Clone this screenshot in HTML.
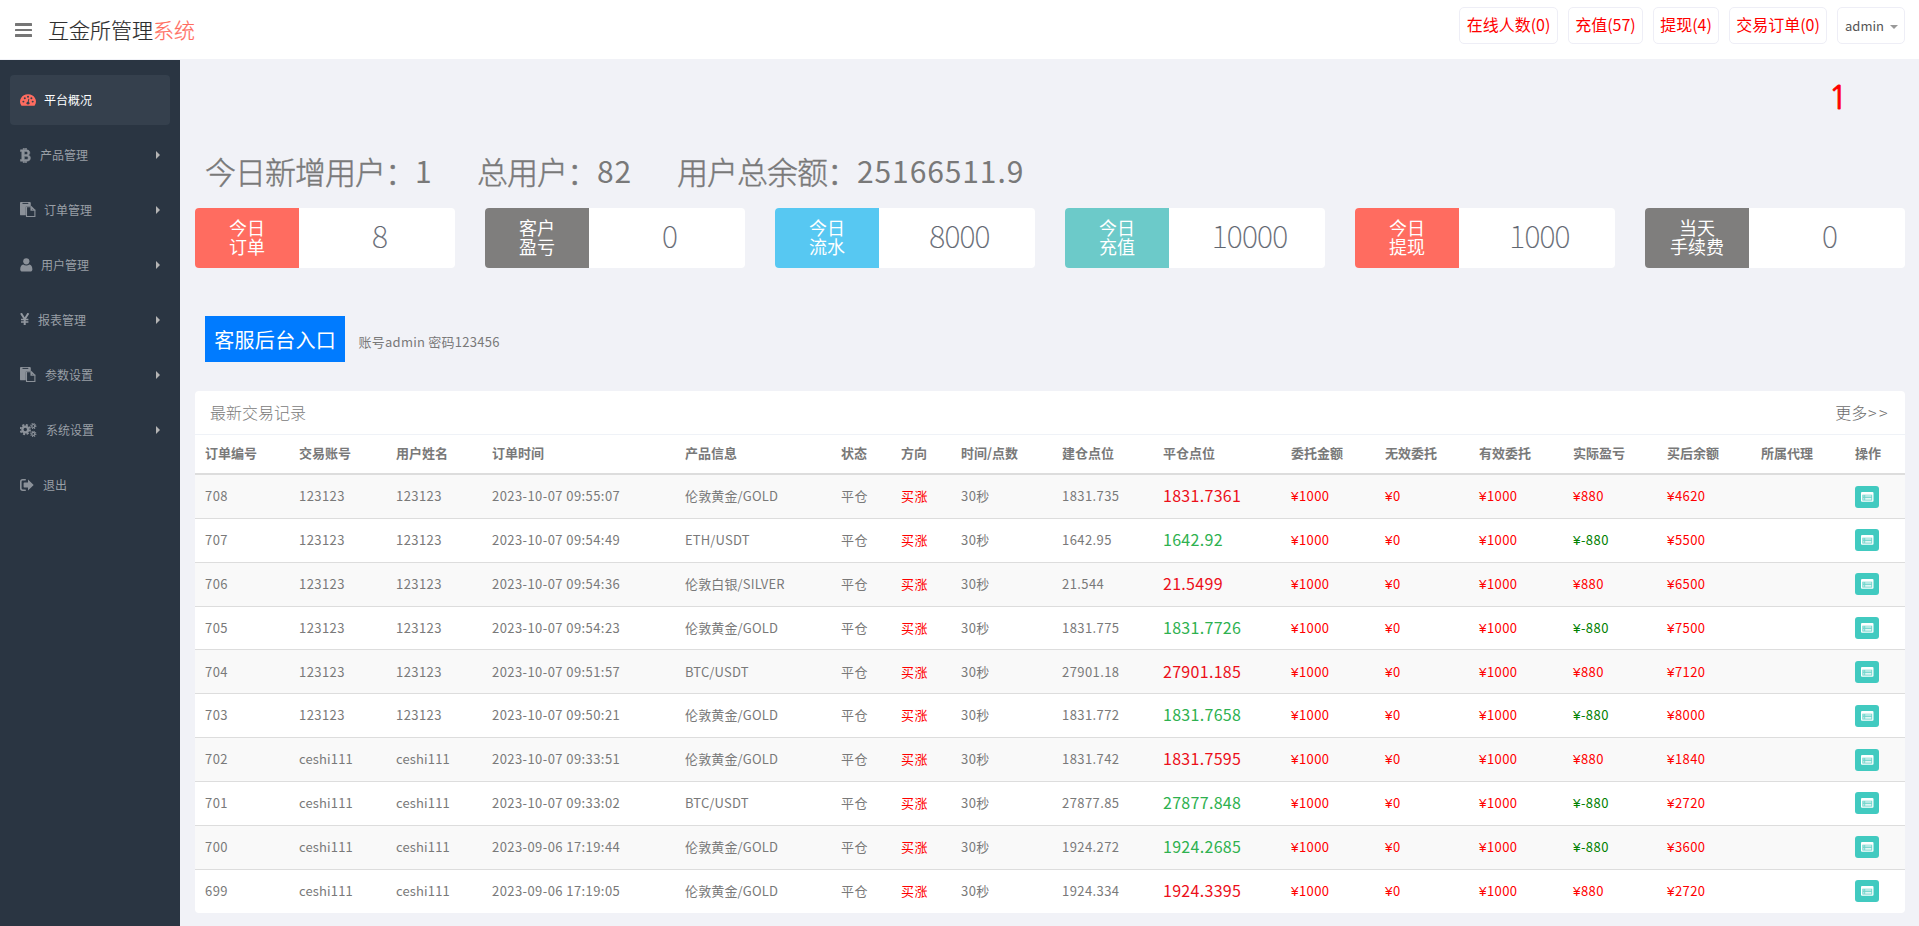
<!DOCTYPE html>
<html lang="zh-CN">
<head>
<meta charset="utf-8">
<title>互金所管理系统</title>
<style>
*{box-sizing:border-box;margin:0;padding:0}
html,body{width:1919px;height:926px;overflow:hidden}
body{font-family:"Liberation Sans","Noto Sans CJK SC",sans-serif;font-size:13px;color:#797979;background:#f1f2f7;position:relative}
#header{position:absolute;left:0;top:0;width:1919px;height:59px;background:#fff}
#burger{position:absolute;left:15px;top:23px;width:17.3px;height:15px}
#burger i{display:block;height:2.8px;background:#767676;margin-bottom:2.9px;border-radius:.5px}
#logo{-webkit-text-stroke:0.2px currentColor;position:absolute;left:48px;top:12px;font-size:21px;line-height:34px;color:#2e2e2e;font-family:"Noto Sans CJK SC","Liberation Sans",sans-serif;font-weight:300;white-space:nowrap}
#logo span{color:#ff6c60}
.tb{position:absolute;top:7px;height:37px;border:1px solid #eeeef6;border-radius:5px;background:#fff;color:#ff0000;font-size:16px;line-height:33px;text-align:center;white-space:nowrap;font-family:"Noto Sans CJK SC","Liberation Sans",sans-serif}
#sidebar{position:absolute;left:0;top:60px;width:180px;height:866px;background:#2a3542}
.mi{position:absolute;left:10px;width:160px;height:50px;border-radius:4px;color:#999fa6;font-size:12px;line-height:50px;font-family:"Noto Sans CJK SC","Liberation Sans",sans-serif}
.mi.act{background:#35404d;color:#fff}
.mi .tx{position:absolute;top:0;white-space:nowrap}
.mi .ar{position:absolute;left:146px;top:21px;width:0;height:0;border-left:4px solid #b4b4b4;border-top:4px solid transparent;border-bottom:4px solid transparent}
.mi svg{position:absolute}
#one{position:absolute;left:1828.5px;top:78.1px;font-size:32px;line-height:40px;color:#ff0000;font-family:"NanumGothic","Liberation Sans",sans-serif;-webkit-text-stroke:0.8px #ff0000}
#h1 span{position:absolute;top:149px;font-size:31px;letter-spacing:-1px;line-height:44px;color:#797979;white-space:nowrap;font-family:"Noto Sans CJK SC","Liberation Sans",sans-serif;font-weight:300;-webkit-text-stroke:0.42px #797979}
#h1 b{font-weight:400;font-size:30px;letter-spacing:0.9px;-webkit-text-stroke:0;position:relative;top:-1px}
.card{position:absolute;top:208px;width:260px;height:60px;background:#fff;border-radius:4px;overflow:hidden}
.card .sym{position:absolute;left:0;top:0;width:104px;height:60px;color:#fff;font-size:18px;line-height:19.8px;text-align:center;padding-top:9.5px;font-family:"Noto Sans CJK SC","Liberation Sans",sans-serif}
.card .val{position:absolute;left:106.5px;top:0;width:156px;height:60px;line-height:54px;text-align:center;font-size:30.5px;letter-spacing:-0.8px;color:#5f6670;font-family:"Noto Sans CJK SC",sans-serif;font-weight:100;-webkit-text-stroke:0.22px #5f6670}
#kf{position:absolute;left:205px;top:316px;width:140px;height:46px;background:#007bff;color:#fff;font-size:20px;line-height:48px;text-align:center;letter-spacing:0.3px;padding-left:0.3px;font-family:"Noto Sans CJK SC","Liberation Sans",sans-serif}
#acc{position:absolute;left:358.5px;top:331.5px;font-size:13px;letter-spacing:0.25px;line-height:20px;color:#797979;white-space:nowrap;font-family:"Noto Sans CJK SC","Liberation Sans",sans-serif}
#panel{position:absolute;left:195px;top:391px;width:1710px;height:522px;background:#fff;border-radius:4px}
#ptitle{position:absolute;left:15px;top:10px;font-size:16px;line-height:22px;color:#7a7a7a;font-family:"Noto Sans CJK SC","Liberation Sans",sans-serif;font-weight:300}
#more{position:absolute;right:15px;top:10px;font-size:16px;line-height:22px;color:#6c6c6c;font-family:"Noto Sans CJK SC","Liberation Sans",sans-serif;font-weight:300}
#more span{letter-spacing:2.5px;margin-left:0.5px}
#phl{position:absolute;left:0;top:43px;width:1710px;height:1px;background:#eff2f7}
table{position:absolute;left:0;top:44px;width:1710px;border-collapse:separate;border-spacing:0;table-layout:fixed;font-family:"Noto Sans CJK SC","Liberation Sans",sans-serif}
th{height:40px;text-align:left;padding:0 0 3px 10px;font-size:13px;font-weight:bold;color:#797979;border-bottom:2px solid #ddd;white-space:nowrap}
td{height:44px;line-height:18px;padding:0 0 2px 10px;letter-spacing:0.42px;font-size:13px;color:#797979;border-top:1px solid #ddd;white-space:nowrap}
tbody tr:first-child td{border-top:none;height:43px}
tbody tr:nth-child(4) td{height:43px;padding-bottom:0}
tbody tr:nth-child(5) td{padding-bottom:0}
tbody tr:nth-child(5) td.pr{padding-bottom:2px}
tbody tr:nth-child(4) td.pg{padding-bottom:2px}
tbody tr .btn{top:0.5px}
tbody tr:nth-child(1) .btn,tbody tr:nth-child(6) .btn,tbody tr:nth-child(7) .btn{top:1.5px}
tbody tr:nth-child(4) .btn{top:0}
tbody tr:nth-child(odd) td{background:#f9f9f9}
tbody td:nth-child(5){letter-spacing:0.15px}
tbody tr:nth-child(n+7) td:nth-child(2),tbody tr:nth-child(n+7) td:nth-child(3){letter-spacing:0.15px}
.r{color:#ff0000}.g{color:#008000}
.pr{font-size:16px;color:#ec0f1a;letter-spacing:0.3px;padding-bottom:4px}.pg{font-size:16px;color:#2eb14f;letter-spacing:0.3px;padding-bottom:4px}
.y{font-family:"Liberation Sans",sans-serif;font-size:13.5px;line-height:0}
.btn{display:block;width:24px;height:22px;border-radius:3px;background:#41cac0;position:relative;top:1.5px}
.btn svg{position:absolute;left:5.9px;top:6.3px}
</style>
</head>
<body>
<div id="header">
<div id="burger"><i></i><i></i><i></i></div>
<div id="logo">互金所管理<span>系统</span></div>
<div class="tb" style="left:1459px;width:99px">在线人数(0)</div>
<div class="tb" style="left:1568px;width:75px">充值(57)</div>
<div class="tb" style="left:1653px;width:66px">提现(4)</div>
<div class="tb" style="left:1729px;width:98px">交易订单(0)</div>
<div class="tb" style="left:1837px;width:68px;color:#555;font-size:13px;line-height:35px;text-align:left;padding-left:7px">admin<i style="position:absolute;left:52px;top:17px;width:0;height:0;border-top:4px solid #999;border-left:4px solid transparent;border-right:4px solid transparent"></i></div>
</div>
<div id="sidebar">
<div class="mi act" style="top:15px">
<svg style="left:10px;top:19px" width="16" height="12" viewBox="0 0 16 13" preserveAspectRatio="none"><path d="M8 0.3a7.9 7.9 0 0 0-6.7 12.1c0.15 0.3 0.4 0.4 0.7 0.4h12c0.3 0 0.55-0.1 0.7-0.4A7.9 7.9 0 0 0 8 0.3z" fill="#ff6c60"/><g fill="#35404d"><circle cx="3.4" cy="8.2" r="1"/><circle cx="4.8" cy="4.6" r="1"/><circle cx="8" cy="3" r="1"/><circle cx="11.4" cy="4.6" r="1"/><circle cx="12.7" cy="8.2" r="1"/><circle cx="8" cy="10" r="1.5"/><path d="M8.4 5.2l0.9 0.2-0.8 4.2-0.9-0.2z"/></g></svg>
<span class="tx" style="left:34px">平台概况</span></div>
<div class="mi" style="top:70px">
<svg style="left:10px;top:18px" width="11" height="15" viewBox="0 0 11 15"><path d="M3.2 0.2v1.6H0.4v1.7h1.4v8H0.4v1.7h2.8v1.6h1.2v-1.6h0.9v1.6h1.2v-1.6c2.6-0.1 3.9-1.2 3.9-3.3 0-1.5-0.8-2.4-2.2-2.7 1-0.4 1.6-1.2 1.6-2.4 0-1.9-1.2-2.8-3.3-3V0.2H5.3v1.6H4.4V0.2zM4.3 3.5h1.5c1.3 0 1.9 0.5 1.9 1.5s-0.7 1.5-1.9 1.5H4.3zM4.3 8.3h1.8c1.4 0 2.1 0.6 2.1 1.6s-0.7 1.6-2.1 1.6H4.3z" fill="#8b9199" stroke="#8b9199" stroke-width="0.55"/></svg>
<span class="tx" style="left:30px">产品管理</span><i class="ar"></i></div>
<div class="mi" style="top:125px">
<svg style="left:10px;top:17px" width="16" height="16" viewBox="0 0 16 16"><path d="M0 0.900C0 0.400 0.400 0 0.900 0h9c0.500 0 0.900 0.400 0.900 0.900V4H7C6.300 4 5.800 4.500 5.800 5.200V13.300H0.900C0.400 13.300 0 12.900 0 12.400z" fill="#8b9199"/><path d="M2.500 0.900h5.800v1h-5.800z" fill="#2a3542"/><path d="M6.500 4.700h4.500v3.400h3.900v6.400H6.500zM11.600 5l3 3h-3z" fill="none" stroke="#8b9199" stroke-width="1.100"/></svg>
<span class="tx" style="left:34px">订单管理</span><i class="ar"></i></div>
<div class="mi" style="top:180px">
<svg style="left:10px;top:18px" width="13" height="14" viewBox="0 0 13 14"><circle cx="6.3" cy="3.3" r="3.1" fill="#8b9199"/><path d="M0.2 11.5c0-3.2 1.2-4.9 3-5.1 0.8 0.7 1.9 1.1 3.1 1.1s2.3-0.4 3.1-1.1c1.8 0.2 3 1.9 3 5.1 0 1.3-0.9 2.1-2.1 2.1H2.3c-1.2 0-2.1-0.8-2.1-2.1z" fill="#8b9199"/></svg>
<span class="tx" style="left:31px">用户管理</span><i class="ar"></i></div>
<div class="mi" style="top:235px">
<svg style="left:10px;top:18px" width="10" height="12" viewBox="0 0 10 12"><g fill="none" stroke="#9298a0" stroke-width="2"><path d="M1 0.200L4.700 6.200 8.400 0.200M4.700 5.800V12"/><path d="M1 6.500h7.400M1 9.100h7.400" stroke-width="1.500"/></g></svg>
<span class="tx" style="left:28px">报表管理</span><i class="ar"></i></div>
<div class="mi" style="top:290px">
<svg style="left:10px;top:17px" width="16" height="16" viewBox="0 0 16 16"><path d="M0 0.900C0 0.400 0.400 0 0.900 0h9c0.500 0 0.900 0.400 0.900 0.900V4H7C6.300 4 5.800 4.500 5.800 5.200V13.300H0.900C0.400 13.300 0 12.900 0 12.400z" fill="#8b9199"/><path d="M2.500 0.900h5.800v1h-5.800z" fill="#2a3542"/><path d="M6.500 4.700h4.500v3.400h3.900v6.400H6.500zM11.600 5l3 3h-3z" fill="none" stroke="#8b9199" stroke-width="1.100"/></svg>
<span class="tx" style="left:35px">参数设置</span><i class="ar"></i></div>
<div class="mi" style="top:345px">
<svg style="left:10px;top:17px" width="17" height="16" viewBox="0 0 17 16"><g fill="#8b9199" stroke="none"><circle cx="5.300" cy="7.500" r="4"/><circle cx="13.300" cy="4" r="2.100"/><circle cx="13.300" cy="11.900" r="2.100"/></g><g fill="none" stroke="#8b9199"><circle cx="5.300" cy="7.500" r="4.700" stroke-width="1.900" stroke-dasharray="2.100 1.590"/><circle cx="13.300" cy="4" r="2.500" stroke-width="1.200" stroke-dasharray="1.100 0.860"/><circle cx="13.300" cy="11.900" r="2.500" stroke-width="1.200" stroke-dasharray="1.100 0.860"/></g><g fill="#2a3542"><circle cx="5.300" cy="7.500" r="1.700"/><circle cx="13.300" cy="4" r="0.900"/><circle cx="13.300" cy="11.900" r="0.900"/></g></svg>
<span class="tx" style="left:36px">系统设置</span><i class="ar"></i></div>
<div class="mi" style="top:400px">
<svg style="left:10px;top:19px" width="14" height="12" viewBox="0 0 14 12"><path d="M5.200 0.800H2.700C1.500 0.800 0.800 1.500 0.800 2.700v6.600c0 1.200 0.700 1.900 1.900 1.900H5.200" fill="none" stroke="#8b9199" stroke-width="1.600" stroke-linecap="round"/><path d="M8 0.500L13.700 6 8 11.500V8.400H4.300C3.900 8.400 3.600 8.100 3.600 7.700V4.300c0-0.400 0.300-0.700 0.700-0.700H8z" fill="#8b9199"/></svg>
<span class="tx" style="left:33px">退出</span></div>
</div>
<div id="one">1</div>
<div id="h1"><span style="left:205px">今日新增用户：<b>1</b></span><span style="left:477px">总用户：<b>82</b></span><span style="left:677px">用户总余额：<b>25166511.9</b></span></div>
<div class="card" style="left:195px"><div class="sym" style="background:#ff6c60">今日<br>订单</div><div class="val">8</div></div>
<div class="card" style="left:485px"><div class="sym" style="background:#7f7e7d">客户<br>盈亏</div><div class="val">0</div></div>
<div class="card" style="left:775px"><div class="sym" style="background:#57c8f2">今日<br>流水</div><div class="val">8000</div></div>
<div class="card" style="left:1065px"><div class="sym" style="background:#6ccac9">今日<br>充值</div><div class="val">10000</div></div>
<div class="card" style="left:1355px"><div class="sym" style="background:#ff6c60">今日<br>提现</div><div class="val">1000</div></div>
<div class="card" style="left:1645px"><div class="sym" style="background:#7f7e7d">当天<br>手续费</div><div class="val">0</div></div>
<div id="kf">客服后台入口</div>
<div id="acc">账号admin 密码123456</div>
<div id="panel">
<div id="ptitle">最新交易记录</div>
<div id="more">更多<span>&gt;&gt;</span></div>
<div id="phl"></div>
<table><colgroup><col style="width:94px"><col style="width:97px"><col style="width:96px"><col style="width:193px"><col style="width:156px"><col style="width:60px"><col style="width:60px"><col style="width:101px"><col style="width:101px"><col style="width:128px"><col style="width:94px"><col style="width:94px"><col style="width:94px"><col style="width:94px"><col style="width:94px"><col style="width:94px"><col style="width:60px"></colgroup>
<thead><tr><th>订单编号</th><th>交易账号</th><th>用户姓名</th><th>订单时间</th><th>产品信息</th><th>状态</th><th>方向</th><th>时间/点数</th><th>建仓点位</th><th>平仓点位</th><th>委托金额</th><th>无效委托</th><th>有效委托</th><th>实际盈亏</th><th>买后余额</th><th>所属代理</th><th>操作</th></tr></thead>
<tbody>
<tr><td>708</td><td>123123</td><td>123123</td><td>2023-10-07 09:55:07</td><td>伦敦黄金/GOLD</td><td>平仓</td><td class="r">买涨</td><td>30秒</td><td>1831.735</td><td class="pr">1831.7361</td><td class="r"><span class="y">¥</span>1000</td><td class="r"><span class="y">¥</span>0</td><td class="r"><span class="y">¥</span>1000</td><td class="r"><span class="y">¥</span>880</td><td class="r"><span class="y">¥</span>4620</td><td></td><td><span class="btn"><svg width="13" height="10" viewBox="0 0 13 10"><rect x="0" y="0" width="12.5" height="9.7" rx="1" fill="#fff"/><rect x="1.3" y="2.7" width="9.9" height="5.9" fill="#72d6cd"/><rect x="4.200" y="3.500" width="6.100" height="1" fill="#fff" opacity=".92"/><rect x="4.200" y="5.900" width="6.100" height="1.800" fill="#fff" opacity=".78"/><rect x="2.200" y="3.500" width="1.100" height="1" fill="#fff" opacity=".55"/><rect x="2.200" y="5.900" width="1.100" height="1.800" fill="#fff" opacity=".55"/></svg></span></td></tr>
<tr><td>707</td><td>123123</td><td>123123</td><td>2023-10-07 09:54:49</td><td>ETH/USDT</td><td>平仓</td><td class="r">买涨</td><td>30秒</td><td>1642.95</td><td class="pg">1642.92</td><td class="r"><span class="y">¥</span>1000</td><td class="r"><span class="y">¥</span>0</td><td class="r"><span class="y">¥</span>1000</td><td class="g"><span class="y">¥</span>-880</td><td class="r"><span class="y">¥</span>5500</td><td></td><td><span class="btn"><svg width="13" height="10" viewBox="0 0 13 10"><rect x="0" y="0" width="12.5" height="9.7" rx="1" fill="#fff"/><rect x="1.3" y="2.7" width="9.9" height="5.9" fill="#72d6cd"/><rect x="4.200" y="3.500" width="6.100" height="1" fill="#fff" opacity=".92"/><rect x="4.200" y="5.900" width="6.100" height="1.800" fill="#fff" opacity=".78"/><rect x="2.200" y="3.500" width="1.100" height="1" fill="#fff" opacity=".55"/><rect x="2.200" y="5.900" width="1.100" height="1.800" fill="#fff" opacity=".55"/></svg></span></td></tr>
<tr><td>706</td><td>123123</td><td>123123</td><td>2023-10-07 09:54:36</td><td>伦敦白银/SILVER</td><td>平仓</td><td class="r">买涨</td><td>30秒</td><td>21.544</td><td class="pr">21.5499</td><td class="r"><span class="y">¥</span>1000</td><td class="r"><span class="y">¥</span>0</td><td class="r"><span class="y">¥</span>1000</td><td class="r"><span class="y">¥</span>880</td><td class="r"><span class="y">¥</span>6500</td><td></td><td><span class="btn"><svg width="13" height="10" viewBox="0 0 13 10"><rect x="0" y="0" width="12.5" height="9.7" rx="1" fill="#fff"/><rect x="1.3" y="2.7" width="9.9" height="5.9" fill="#72d6cd"/><rect x="4.200" y="3.500" width="6.100" height="1" fill="#fff" opacity=".92"/><rect x="4.200" y="5.900" width="6.100" height="1.800" fill="#fff" opacity=".78"/><rect x="2.200" y="3.500" width="1.100" height="1" fill="#fff" opacity=".55"/><rect x="2.200" y="5.900" width="1.100" height="1.800" fill="#fff" opacity=".55"/></svg></span></td></tr>
<tr><td>705</td><td>123123</td><td>123123</td><td>2023-10-07 09:54:23</td><td>伦敦黄金/GOLD</td><td>平仓</td><td class="r">买涨</td><td>30秒</td><td>1831.775</td><td class="pg">1831.7726</td><td class="r"><span class="y">¥</span>1000</td><td class="r"><span class="y">¥</span>0</td><td class="r"><span class="y">¥</span>1000</td><td class="g"><span class="y">¥</span>-880</td><td class="r"><span class="y">¥</span>7500</td><td></td><td><span class="btn"><svg width="13" height="10" viewBox="0 0 13 10"><rect x="0" y="0" width="12.5" height="9.7" rx="1" fill="#fff"/><rect x="1.3" y="2.7" width="9.9" height="5.9" fill="#72d6cd"/><rect x="4.200" y="3.500" width="6.100" height="1" fill="#fff" opacity=".92"/><rect x="4.200" y="5.900" width="6.100" height="1.800" fill="#fff" opacity=".78"/><rect x="2.200" y="3.500" width="1.100" height="1" fill="#fff" opacity=".55"/><rect x="2.200" y="5.900" width="1.100" height="1.800" fill="#fff" opacity=".55"/></svg></span></td></tr>
<tr><td>704</td><td>123123</td><td>123123</td><td>2023-10-07 09:51:57</td><td>BTC/USDT</td><td>平仓</td><td class="r">买涨</td><td>30秒</td><td>27901.18</td><td class="pr">27901.185</td><td class="r"><span class="y">¥</span>1000</td><td class="r"><span class="y">¥</span>0</td><td class="r"><span class="y">¥</span>1000</td><td class="r"><span class="y">¥</span>880</td><td class="r"><span class="y">¥</span>7120</td><td></td><td><span class="btn"><svg width="13" height="10" viewBox="0 0 13 10"><rect x="0" y="0" width="12.5" height="9.7" rx="1" fill="#fff"/><rect x="1.3" y="2.7" width="9.9" height="5.9" fill="#72d6cd"/><rect x="4.200" y="3.500" width="6.100" height="1" fill="#fff" opacity=".92"/><rect x="4.200" y="5.900" width="6.100" height="1.800" fill="#fff" opacity=".78"/><rect x="2.200" y="3.500" width="1.100" height="1" fill="#fff" opacity=".55"/><rect x="2.200" y="5.900" width="1.100" height="1.800" fill="#fff" opacity=".55"/></svg></span></td></tr>
<tr><td>703</td><td>123123</td><td>123123</td><td>2023-10-07 09:50:21</td><td>伦敦黄金/GOLD</td><td>平仓</td><td class="r">买涨</td><td>30秒</td><td>1831.772</td><td class="pg">1831.7658</td><td class="r"><span class="y">¥</span>1000</td><td class="r"><span class="y">¥</span>0</td><td class="r"><span class="y">¥</span>1000</td><td class="g"><span class="y">¥</span>-880</td><td class="r"><span class="y">¥</span>8000</td><td></td><td><span class="btn"><svg width="13" height="10" viewBox="0 0 13 10"><rect x="0" y="0" width="12.5" height="9.7" rx="1" fill="#fff"/><rect x="1.3" y="2.7" width="9.9" height="5.9" fill="#72d6cd"/><rect x="4.200" y="3.500" width="6.100" height="1" fill="#fff" opacity=".92"/><rect x="4.200" y="5.900" width="6.100" height="1.800" fill="#fff" opacity=".78"/><rect x="2.200" y="3.500" width="1.100" height="1" fill="#fff" opacity=".55"/><rect x="2.200" y="5.900" width="1.100" height="1.800" fill="#fff" opacity=".55"/></svg></span></td></tr>
<tr><td>702</td><td>ceshi111</td><td>ceshi111</td><td>2023-10-07 09:33:51</td><td>伦敦黄金/GOLD</td><td>平仓</td><td class="r">买涨</td><td>30秒</td><td>1831.742</td><td class="pr">1831.7595</td><td class="r"><span class="y">¥</span>1000</td><td class="r"><span class="y">¥</span>0</td><td class="r"><span class="y">¥</span>1000</td><td class="r"><span class="y">¥</span>880</td><td class="r"><span class="y">¥</span>1840</td><td></td><td><span class="btn"><svg width="13" height="10" viewBox="0 0 13 10"><rect x="0" y="0" width="12.5" height="9.7" rx="1" fill="#fff"/><rect x="1.3" y="2.7" width="9.9" height="5.9" fill="#72d6cd"/><rect x="4.200" y="3.500" width="6.100" height="1" fill="#fff" opacity=".92"/><rect x="4.200" y="5.900" width="6.100" height="1.800" fill="#fff" opacity=".78"/><rect x="2.200" y="3.500" width="1.100" height="1" fill="#fff" opacity=".55"/><rect x="2.200" y="5.900" width="1.100" height="1.800" fill="#fff" opacity=".55"/></svg></span></td></tr>
<tr><td>701</td><td>ceshi111</td><td>ceshi111</td><td>2023-10-07 09:33:02</td><td>BTC/USDT</td><td>平仓</td><td class="r">买涨</td><td>30秒</td><td>27877.85</td><td class="pg">27877.848</td><td class="r"><span class="y">¥</span>1000</td><td class="r"><span class="y">¥</span>0</td><td class="r"><span class="y">¥</span>1000</td><td class="g"><span class="y">¥</span>-880</td><td class="r"><span class="y">¥</span>2720</td><td></td><td><span class="btn"><svg width="13" height="10" viewBox="0 0 13 10"><rect x="0" y="0" width="12.5" height="9.7" rx="1" fill="#fff"/><rect x="1.3" y="2.7" width="9.9" height="5.9" fill="#72d6cd"/><rect x="4.200" y="3.500" width="6.100" height="1" fill="#fff" opacity=".92"/><rect x="4.200" y="5.900" width="6.100" height="1.800" fill="#fff" opacity=".78"/><rect x="2.200" y="3.500" width="1.100" height="1" fill="#fff" opacity=".55"/><rect x="2.200" y="5.900" width="1.100" height="1.800" fill="#fff" opacity=".55"/></svg></span></td></tr>
<tr><td>700</td><td>ceshi111</td><td>ceshi111</td><td>2023-09-06 17:19:44</td><td>伦敦黄金/GOLD</td><td>平仓</td><td class="r">买涨</td><td>30秒</td><td>1924.272</td><td class="pg">1924.2685</td><td class="r"><span class="y">¥</span>1000</td><td class="r"><span class="y">¥</span>0</td><td class="r"><span class="y">¥</span>1000</td><td class="g"><span class="y">¥</span>-880</td><td class="r"><span class="y">¥</span>3600</td><td></td><td><span class="btn"><svg width="13" height="10" viewBox="0 0 13 10"><rect x="0" y="0" width="12.5" height="9.7" rx="1" fill="#fff"/><rect x="1.3" y="2.7" width="9.9" height="5.9" fill="#72d6cd"/><rect x="4.200" y="3.500" width="6.100" height="1" fill="#fff" opacity=".92"/><rect x="4.200" y="5.900" width="6.100" height="1.800" fill="#fff" opacity=".78"/><rect x="2.200" y="3.500" width="1.100" height="1" fill="#fff" opacity=".55"/><rect x="2.200" y="5.900" width="1.100" height="1.800" fill="#fff" opacity=".55"/></svg></span></td></tr>
<tr><td>699</td><td>ceshi111</td><td>ceshi111</td><td>2023-09-06 17:19:05</td><td>伦敦黄金/GOLD</td><td>平仓</td><td class="r">买涨</td><td>30秒</td><td>1924.334</td><td class="pr">1924.3395</td><td class="r"><span class="y">¥</span>1000</td><td class="r"><span class="y">¥</span>0</td><td class="r"><span class="y">¥</span>1000</td><td class="r"><span class="y">¥</span>880</td><td class="r"><span class="y">¥</span>2720</td><td></td><td><span class="btn"><svg width="13" height="10" viewBox="0 0 13 10"><rect x="0" y="0" width="12.5" height="9.7" rx="1" fill="#fff"/><rect x="1.3" y="2.7" width="9.9" height="5.9" fill="#72d6cd"/><rect x="4.200" y="3.500" width="6.100" height="1" fill="#fff" opacity=".92"/><rect x="4.200" y="5.900" width="6.100" height="1.800" fill="#fff" opacity=".78"/><rect x="2.200" y="3.500" width="1.100" height="1" fill="#fff" opacity=".55"/><rect x="2.200" y="5.900" width="1.100" height="1.800" fill="#fff" opacity=".55"/></svg></span></td></tr>
</tbody></table>
</div>
</body>
</html>
